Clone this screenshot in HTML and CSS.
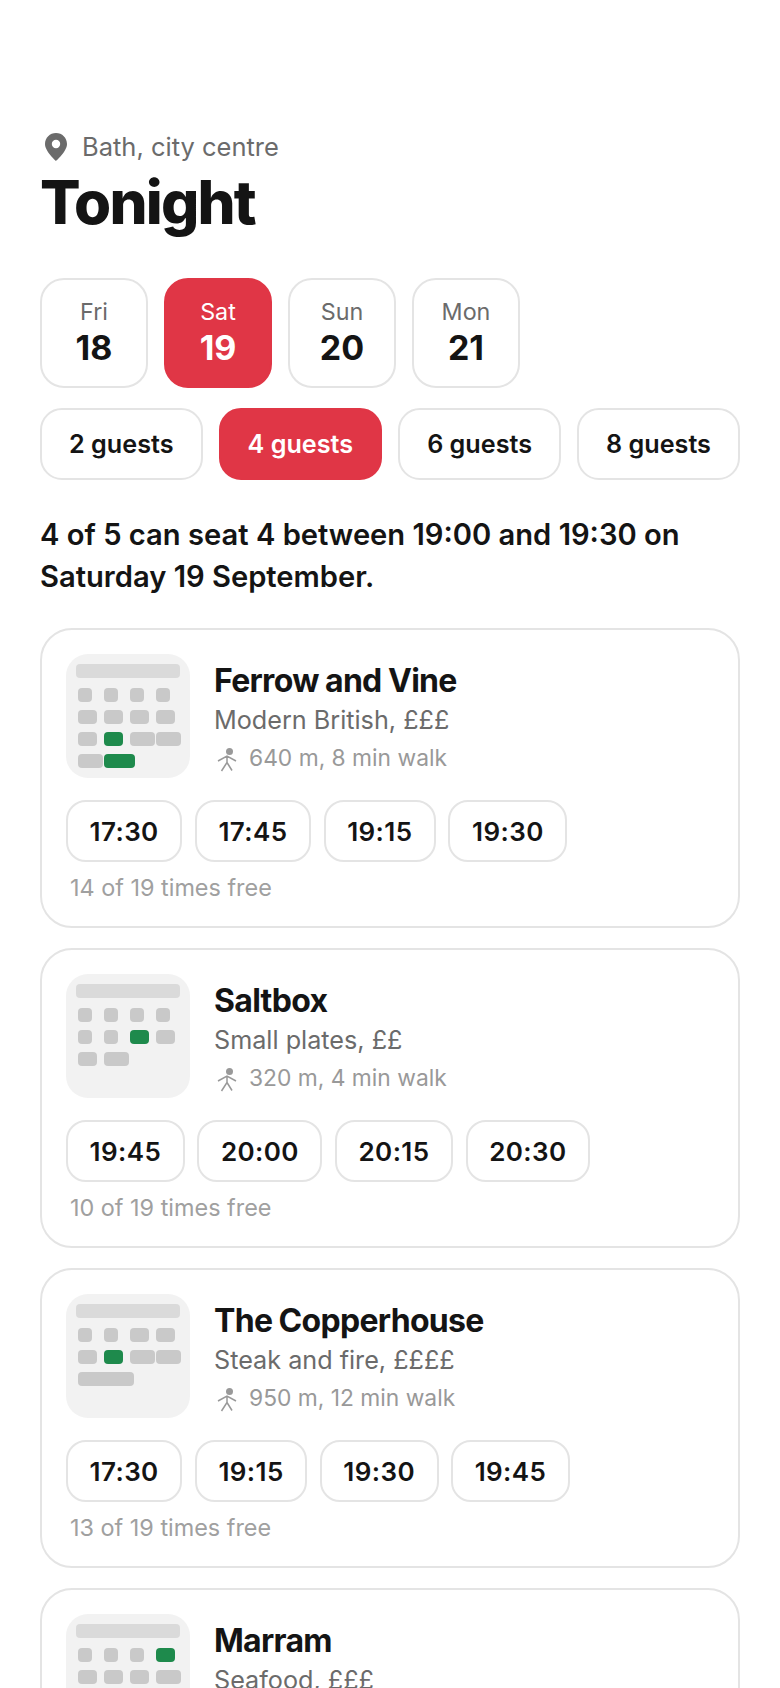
FILE: index.html
```html
<!DOCTYPE html>
<html lang="en">
<head>
<meta charset="utf-8">
<title>Tonight</title>
<link rel="stylesheet" href="styles.css">
</head>
<body>
<main class="page">
  <header class="top">
    <p class="place">
      <svg class="pin" viewBox="0 0 22 28" aria-hidden="true"><path fill-rule="evenodd" d="M11 0C4.9 0 0 4.9 0 11c0 7.500 11 17 11 17s11-9.500 11-17C22 4.900 17.100 0 11 0zm0 6.800a4.200 4.200 0 1 1 0 8.400 4.200 4.200 0 0 1 0-8.400z"/></svg>
      <span>Bath, city centre</span>
    </p>
    <h1 class="title">Tonight</h1>
  </header>

  <div class="dates">
    <button class="date"><span class="dow">Fri</span><span class="dom">18</span></button>
    <button class="date is-on"><span class="dow">Sat</span><span class="dom">19</span></button>
    <button class="date"><span class="dow">Sun</span><span class="dom">20</span></button>
    <button class="date"><span class="dow">Mon</span><span class="dom">21</span></button>
  </div>

  <div class="guests">
    <button class="guest">2 guests</button>
    <button class="guest is-on">4 guests</button>
    <button class="guest">6 guests</button>
    <button class="guest">8 guests</button>
  </div>

  <p class="summary">4 of 5 can seat 4 between 19:00 and 19:30 on Saturday 19 September.</p>

  <section class="list">
    <article class="card">
      <div class="head">
        <svg class="plan" viewBox="0 0 124 124" aria-hidden="true">
          <rect class="bar" x="10" y="10" width="104" height="14" rx="4"/>
          <rect class="tbl" x="12" y="34" width="14" height="14" rx="4"/>
          <rect class="tbl" x="38" y="34" width="14" height="14" rx="4"/>
          <rect class="tbl" x="64" y="34" width="14" height="14" rx="4"/>
          <rect class="tbl" x="90" y="34" width="14" height="14" rx="4"/>
          <rect class="tbl" x="12" y="56" width="19" height="14" rx="4"/>
          <rect class="tbl" x="38" y="56" width="19" height="14" rx="4"/>
          <rect class="tbl" x="64" y="56" width="19" height="14" rx="4"/>
          <rect class="tbl" x="90" y="56" width="19" height="14" rx="4"/>
          <rect class="tbl" x="12" y="78" width="19" height="14" rx="4"/>
          <rect class="free" x="38" y="78" width="19" height="14" rx="4"/>
          <rect class="tbl" x="64" y="78" width="25" height="14" rx="4"/>
          <rect class="tbl" x="90" y="78" width="25" height="14" rx="4"/>
          <rect class="tbl" x="12" y="100" width="25" height="14" rx="4"/>
          <rect class="free" x="38" y="100" width="31" height="14" rx="4"/>
        </svg>
        <div class="info">
          <h2 class="name">Ferrow and Vine</h2>
          <p class="cuisine">Modern British, £££</p>
          <p class="walk">
            <svg class="walker" viewBox="0 0 20 24" aria-hidden="true"><circle cx="12.500" cy="3.500" r="3.500"/><path d="M1 13 10 8 19 13M10 8V14.500L4.500 23M10 14.500 15 22.500"/></svg>
            <span>640 m, 8 min walk</span>
          </p>
        </div>
      </div>
      <div class="times">
        <button class="time">17:30</button>
        <button class="time">17:45</button>
        <button class="time">19:15</button>
        <button class="time">19:30</button>
      </div>
      <p class="note">14 of 19 times free</p>
    </article>

    <article class="card">
      <div class="head">
        <svg class="plan" viewBox="0 0 124 124" aria-hidden="true">
          <rect class="bar" x="10" y="10" width="104" height="14" rx="4"/>
          <rect class="tbl" x="12" y="34" width="14" height="14" rx="4"/>
          <rect class="tbl" x="38" y="34" width="14" height="14" rx="4"/>
          <rect class="tbl" x="64" y="34" width="14" height="14" rx="4"/>
          <rect class="tbl" x="90" y="34" width="14" height="14" rx="4"/>
          <rect class="tbl" x="12" y="56" width="14" height="14" rx="4"/>
          <rect class="tbl" x="38" y="56" width="14" height="14" rx="4"/>
          <rect class="free" x="64" y="56" width="19" height="14" rx="4"/>
          <rect class="tbl" x="90" y="56" width="19" height="14" rx="4"/>
          <rect class="tbl" x="12" y="78" width="19" height="14" rx="4"/>
          <rect class="tbl" x="38" y="78" width="25" height="14" rx="4"/>
        </svg>
        <div class="info">
          <h2 class="name">Saltbox</h2>
          <p class="cuisine">Small plates, ££</p>
          <p class="walk">
            <svg class="walker" viewBox="0 0 20 24" aria-hidden="true"><circle cx="12.500" cy="3.500" r="3.500"/><path d="M1 13 10 8 19 13M10 8V14.500L4.500 23M10 14.500 15 22.500"/></svg>
            <span>320 m, 4 min walk</span>
          </p>
        </div>
      </div>
      <div class="times">
        <button class="time">19:45</button>
        <button class="time">20:00</button>
        <button class="time">20:15</button>
        <button class="time">20:30</button>
      </div>
      <p class="note">10 of 19 times free</p>
    </article>

    <article class="card">
      <div class="head">
        <svg class="plan" viewBox="0 0 124 124" aria-hidden="true">
          <rect class="bar" x="10" y="10" width="104" height="14" rx="4"/>
          <rect class="tbl" x="12" y="34" width="14" height="14" rx="4"/>
          <rect class="tbl" x="38" y="34" width="14" height="14" rx="4"/>
          <rect class="tbl" x="64" y="34" width="19" height="14" rx="4"/>
          <rect class="tbl" x="90" y="34" width="19" height="14" rx="4"/>
          <rect class="tbl" x="12" y="56" width="19" height="14" rx="4"/>
          <rect class="free" x="38" y="56" width="19" height="14" rx="4"/>
          <rect class="tbl" x="64" y="56" width="25" height="14" rx="4"/>
          <rect class="tbl" x="90" y="56" width="25" height="14" rx="4"/>
          <rect class="tbl" x="12" y="78" width="56" height="14" rx="4"/>
        </svg>
        <div class="info">
          <h2 class="name">The Copperhouse</h2>
          <p class="cuisine">Steak and fire, ££££</p>
          <p class="walk">
            <svg class="walker" viewBox="0 0 20 24" aria-hidden="true"><circle cx="12.500" cy="3.500" r="3.500"/><path d="M1 13 10 8 19 13M10 8V14.500L4.500 23M10 14.500 15 22.500"/></svg>
            <span>950 m, 12 min walk</span>
          </p>
        </div>
      </div>
      <div class="times">
        <button class="time">17:30</button>
        <button class="time">19:15</button>
        <button class="time">19:30</button>
        <button class="time">19:45</button>
      </div>
      <p class="note">13 of 19 times free</p>
    </article>

    <article class="card">
      <div class="head">
        <svg class="plan" viewBox="0 0 124 124" aria-hidden="true">
          <rect class="bar" x="10" y="10" width="104" height="14" rx="4"/>
          <rect class="tbl" x="12" y="34" width="14" height="14" rx="4"/>
          <rect class="tbl" x="38" y="34" width="14" height="14" rx="4"/>
          <rect class="tbl" x="64" y="34" width="14" height="14" rx="4"/>
          <rect class="free" x="90" y="34" width="19" height="14" rx="4"/>
          <rect class="tbl" x="12" y="56" width="19" height="14" rx="4"/>
          <rect class="tbl" x="38" y="56" width="19" height="14" rx="4"/>
          <rect class="tbl" x="64" y="56" width="19" height="14" rx="4"/>
          <rect class="tbl" x="90" y="56" width="25" height="14" rx="4"/>
        </svg>
        <div class="info">
          <h2 class="name">Marram</h2>
          <p class="cuisine">Seafood, £££</p>
        </div>
      </div>
    </article>
  </section>
</main>
</body>
</html>
```
FILE: styles.css
```css
* {
  box-sizing: border-box;
}

html,
body {
  margin: 0;
  height: 1688px;
  overflow: hidden;
  background: #fff;
}

body {
  font-family: Inter, "Liberation Sans", sans-serif;
  color: #141414;
}

p,
h1,
h2 {
  margin: 0;
}

button {
  font: inherit;
  color: inherit;
  background: #fff;
  cursor: pointer;
}

.page {
  padding: 130px 40px 0;
}

/* Heading block */
.place {
  display: flex;
  align-items: center;
  gap: 15px;
  padding-left: 5px;
  font-size: 25.5px;
  line-height: 34px;
  color: #6b6b6b;
}

.pin {
  width: 22px;
  height: 28px;
  fill: #6b6b6b;
}

.title {
  margin-top: 2px;
  font-size: 60px;
  line-height: 72px;
  font-weight: 800;
  letter-spacing: -1.8px;
}

/* Date picker */
.dates {
  display: flex;
  gap: 16px;
  margin-top: 40px;
}

.date {
  width: 108px;
  height: 110px;
  border: 2px solid #e4e4e4;
  border-radius: 24px;
  padding: 0 0 4px;
  display: flex;
  flex-direction: column;
  align-items: center;
  justify-content: center;
}

.dow {
  font-size: 23.3px;
  line-height: 34px;
  color: #6b6b6b;
}

.dom {
  font-size: 34px;
  line-height: 38px;
  font-weight: 700;
}

/* Party size */
.guests {
  display: flex;
  gap: 16px;
  margin-top: 20px;
}

.guest {
  flex: 1 1 auto;
  height: 72px;
  border: 2px solid #e4e4e4;
  border-radius: 22px;
  padding: 0;
  font-size: 25.2px;
  font-weight: 600;
}

.date.is-on,
.guest.is-on {
  background: #e03646;
  border-color: #e03646;
  color: #fff;
}

.date.is-on .dow {
  color: #fff;
}

.summary {
  margin-top: 34px;
  font-size: 29.15px;
  line-height: 42px;
  font-weight: 600;
}

/* Restaurant cards */
.list {
  display: flex;
  flex-direction: column;
  gap: 20px;
  margin-top: 30px;
}

.card {
  height: 300px;
  border: 2px solid #e4e4e4;
  border-radius: 32px;
  padding: 24px;
}

.head {
  display: flex;
  gap: 24px;
  align-items: flex-start;
}

.plan {
  flex: none;
  width: 124px;
  height: 124px;
  border-radius: 22px;
  background: #f2f2f2;
}

.bar {
  fill: #dadada;
}

.tbl {
  fill: #c9c9c9;
}

.free {
  fill: #1e8a4c;
}

.info {
  padding-top: 7px;
}

.name {
  font-size: 32px;
  line-height: 40px;
  font-weight: 700;
  letter-spacing: -0.7px;
  word-spacing: -0.5px;
}

.cuisine {
  font-size: 25.2px;
  line-height: 38px;
  color: #6b6b6b;
}

.walk {
  display: flex;
  align-items: center;
  gap: 12px;
  padding-left: 3px;
  font-size: 22.8px;
  line-height: 38px;
  color: #999;
}

.walker {
  width: 20px;
  height: 24px;
  margin-top: 3px;
  fill: #999;
  stroke: #999;
  stroke-width: 1.5;
}

.walker circle {
  stroke: none;
}

.walker path {
  fill: none;
}

.times {
  display: flex;
  gap: 12.5px;
  margin-top: 22px;
}

.time {
  height: 62px;
  padding: 0 21.6px;
  border: 2px solid #e4e4e4;
  border-radius: 20px;
  font-size: 26px;
  font-weight: 600;
  letter-spacing: 0.4px;
}

.note {
  margin-top: 8px;
  padding-left: 4px;
  font-size: 23.4px;
  line-height: 36px;
  color: #a0a0a0;
}
```
